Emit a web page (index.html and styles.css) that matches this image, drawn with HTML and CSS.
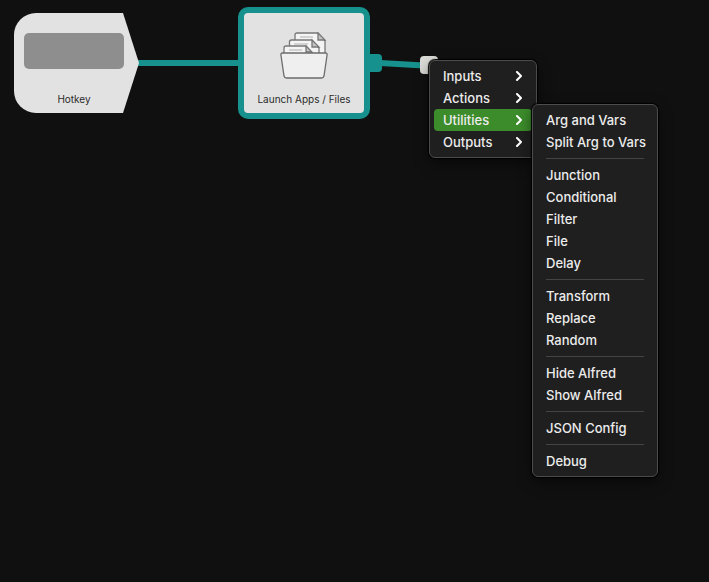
FILE: index.html
```html
<!DOCTYPE html>
<html lang="en">
<head>
<meta charset="utf-8">
<title>Workflow editor</title>
<link rel="stylesheet" href="styles.css">
</head>
<body>
<main class="canvas">
  <svg class="wires" aria-hidden="true">
    <path d="M138 63H240M380 63L424 65.500"/>
  </svg>

  <section class="node node-trigger">
    <svg class="node-shape" viewBox="0 0 125 100" aria-hidden="true"><path d="M22 0H109L125 50L109 100H22A22 22 0 0 1 0 78V22A22 22 0 0 1 22 0Z"/></svg>
    <div class="hotkey-field"></div>
    <span class="node-label">Hotkey</span>
  </section>

  <span class="port port-out"></span>
  <section class="node node-action">
    <svg class="node-icon" viewBox="0 0 48 48" aria-hidden="true">
      <g class="paper">
        <path d="M15 24V3Q15 1 17 1H38L45 9V24Z"/><path class="fold" d="M38 1V8H45Z"/>
        <path d="M9.500 26V10Q9.500 8 11.500 8H32L39 16V26Z"/><path class="fold" d="M32 8V15H39Z"/>
        <path d="M4 30V16Q4 14 6 14H26L33 22V30Z"/><path class="fold" d="M26 14V20H32Z"/>
      </g>
      <path class="lines" d="M20 5H33M14 12H28M9 18H22"/>
      <path class="folder" d="M2.500 21H45.500Q47.500 21 47 23.500L44 44Q43.500 46 41.500 46H6.500Q4.500 46 4 44L1 23.500Q.500 21 2.500 21Z"/>
    </svg>
    <span class="node-label">Launch Apps / Files</span>
  </section>
  <span class="port port-drag"></span>

  <nav class="menu menu-root" aria-label="Add object">
    <button class="item">Inputs<svg class="chevron" viewBox="0 0 8 10"><path d="M2 1L6 5L2 9"/></svg></button>
    <button class="item">Actions<svg class="chevron" viewBox="0 0 8 10"><path d="M2 1L6 5L2 9"/></svg></button>
    <button class="item item-active">Utilities<svg class="chevron" viewBox="0 0 8 10"><path d="M2 1L6 5L2 9"/></svg></button>
    <button class="item">Outputs<svg class="chevron" viewBox="0 0 8 10"><path d="M2 1L6 5L2 9"/></svg></button>
  </nav>

  <nav class="menu menu-sub" aria-label="Utilities">
    <button class="item">Arg and Vars</button>
    <button class="item">Split Arg to Vars</button>
    <hr class="separator">
    <button class="item">Junction</button>
    <button class="item">Conditional</button>
    <button class="item">Filter</button>
    <button class="item">File</button>
    <button class="item">Delay</button>
    <hr class="separator">
    <button class="item">Transform</button>
    <button class="item">Replace</button>
    <button class="item">Random</button>
    <hr class="separator">
    <button class="item">Hide Alfred</button>
    <button class="item">Show Alfred</button>
    <hr class="separator">
    <button class="item">JSON Config</button>
    <hr class="separator">
    <button class="item">Debug</button>
  </nav>
</main>
</body>
</html>
```

FILE: styles.css
```css
* { box-sizing: border-box; }

body {
  margin: 0;
  background: #101010;
  font-family: Inter, "Liberation Sans", sans-serif;
}

.canvas {
  position: relative;
  min-height: 100vh;
  overflow: hidden;
}

.wires {
  position: absolute;
  inset: 0;
  width: 100%;
  height: 100%;
  fill: none;
  stroke: #17918d;
  stroke-width: 6px;
}

/* Nodes on the canvas */
.node {
  position: absolute;
  display: flex;
  flex-direction: column;
  align-items: center;
  justify-content: space-between;
}

.node-trigger {
  left: 14px;
  top: 13px;
  width: 120px;
  height: 100px;
  padding: 20px 10px 7px;
}

.node-shape {
  position: absolute;
  left: 0;
  top: 0;
  width: 125px;
  height: 100px;
  fill: #e2e2e2;
}

.hotkey-field {
  position: relative;
  width: 100%;
  height: 36px;
  border-radius: 5px;
  background: #8e8e8e;
}

.node-action {
  left: 238px;
  top: 7px;
  width: 132px;
  height: 112px;
  padding: 19px 0 7px;
  border: 6px solid #17918d;
  border-radius: 10px;
  background: #e2e2e2;
}

.node-action::before {
  content: "";
  position: absolute;
  inset: 0;
  border-radius: 4px;
}

.node-icon {
  width: 48px;
  height: 48px;
}

.paper { fill: #f4f4f4; stroke: #777; stroke-width: 1.3px; }
.paper .fold { fill: #c4c4c4; }
.lines { fill: none; stroke: #b0b0b0; stroke-width: 1px; }
.folder { fill: #efefef; stroke: #6c6c6c; stroke-width: 1.3px; }

.node-label {
  position: relative;
  font-size: 10px;
  line-height: 14px;
  color: #2b2b2b;
  white-space: nowrap;
}

.port {
  position: absolute;
  width: 18px;
  height: 18px;
  border-radius: 4px;
}

.port-out { left: 364px; top: 54px; background: #17918d; }
.port-drag { left: 420px; top: 56px; background: #dcdcd8; }

/* Menus */
.menu {
  position: absolute;
  display: flex;
  flex-direction: column;
  padding: 4px;
  border: 1px solid #4c4c4c;
  border-radius: 6px;
  background: #1f1f1f;
  box-shadow: 0 0 1px 1px #000, 0 5px 14px rgba(0, 0, 0, .5);
}

.menu-root { left: 429px; top: 60px; width: 108px; }
.menu-sub { left: 532px; top: 104px; width: 126px; }

.item {
  display: flex;
  align-items: center;
  justify-content: space-between;
  height: 22px;
  padding: 0 9px;
  border: 0;
  border-radius: 4px;
  background: none;
  color: #ececec;
  font: 500 13px/22px Inter, "Liberation Sans", sans-serif;
  white-space: nowrap;
}

.item-active { background: #3c8c2b; }

.chevron {
  width: 8px;
  height: 10px;
  fill: none;
  stroke: #fff;
  stroke-width: 2px;
  stroke-linecap: round;
  stroke-linejoin: round;
}

.separator {
  width: calc(100% - 18px);
  height: 1px;
  margin: 5px 9px;
  border: 0;
  background: #444;
}
```
